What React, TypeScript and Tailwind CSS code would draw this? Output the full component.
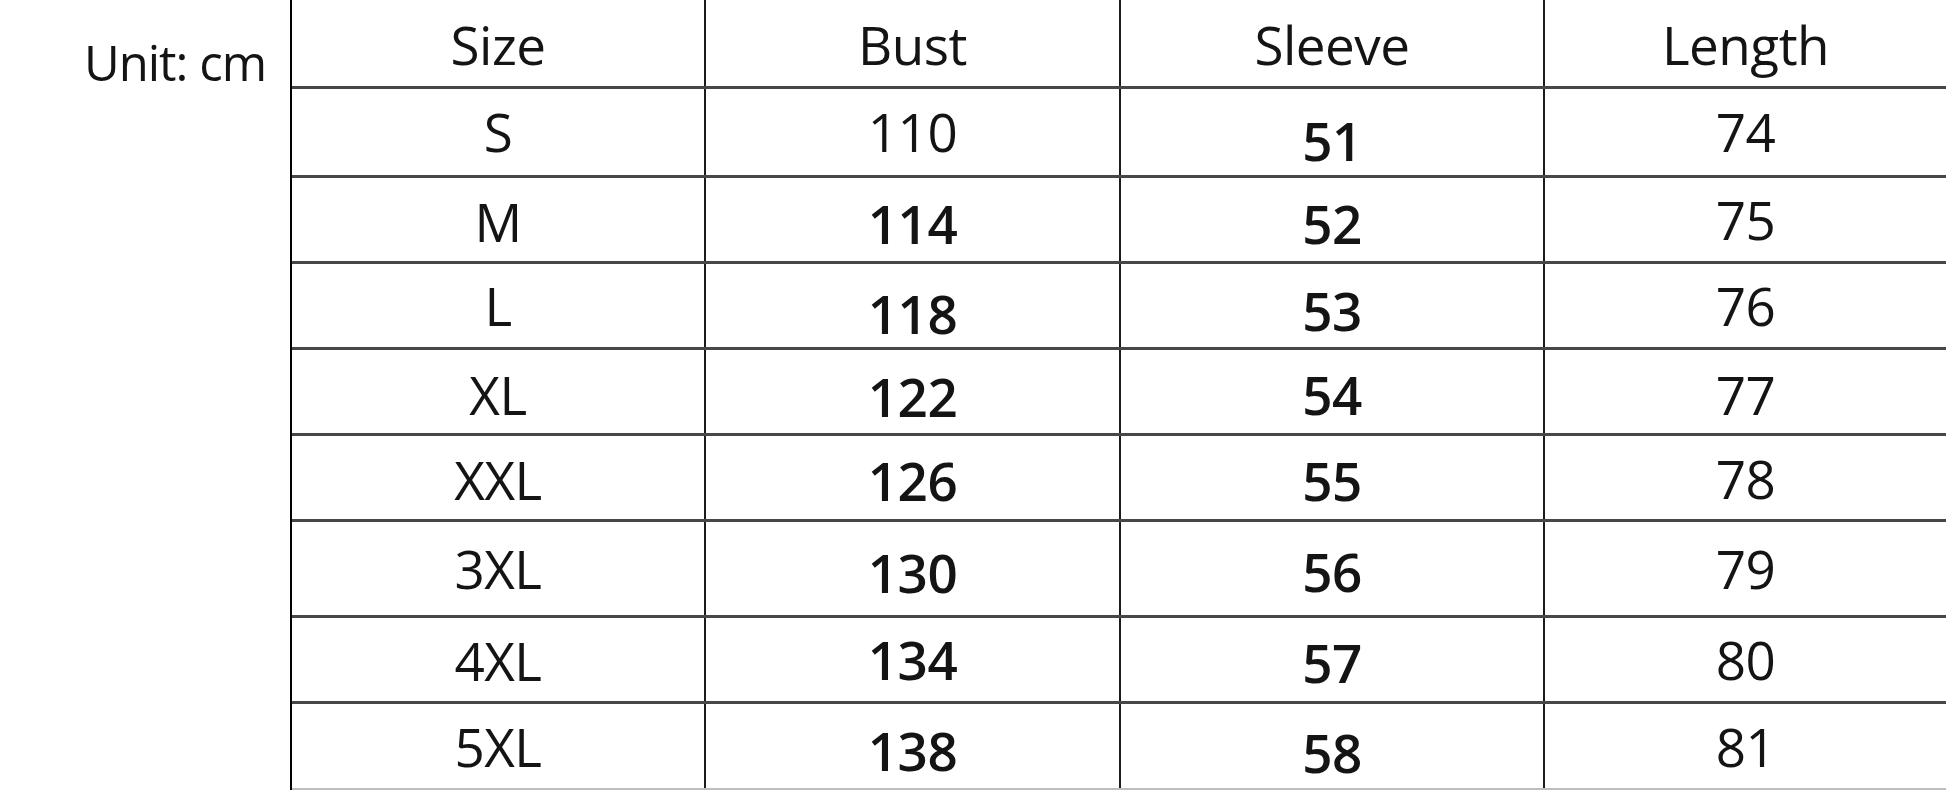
const headers = ["Size", "Bust", "Sleeve", "Length"];

type Cell = { text: string; bold?: boolean; shift: string };

// each row: height + cells; shift = small top padding to nudge text down like the source image
const rows: { h: string; cells: Cell[] }[] = [
  {
    h: "h-[89px]",
    cells: [
      { text: "S", shift: "pt-0" },
      { text: "110", shift: "pt-0" },
      { text: "51", bold: true, shift: "pt-[18px]" },
      { text: "74", shift: "pt-0" },
    ],
  },
  {
    h: "h-[86px]",
    cells: [
      { text: "M", shift: "pt-[4px]" },
      { text: "114", bold: true, shift: "pt-[8px]" },
      { text: "52", bold: true, shift: "pt-[8px]" },
      { text: "75", shift: "pt-0" },
    ],
  },
  {
    h: "h-[86px]",
    cells: [
      { text: "L", shift: "pt-0" },
      { text: "118", bold: true, shift: "pt-[16px]" },
      { text: "53", bold: true, shift: "pt-[10px]" },
      { text: "76", shift: "pt-0" },
    ],
  },
  {
    h: "h-[87px]",
    cells: [
      { text: "XL", shift: "pt-[6px]" },
      { text: "122", bold: true, shift: "pt-[10px]" },
      { text: "54", bold: true, shift: "pt-[6px]" },
      { text: "77", shift: "pt-[6px]" },
    ],
  },
  {
    h: "h-[86px]",
    cells: [
      { text: "XXL", shift: "pt-[4px]" },
      { text: "126", bold: true, shift: "pt-[6px]" },
      { text: "55", bold: true, shift: "pt-[6px]" },
      { text: "78", shift: "pt-[2px]" },
    ],
  },
  {
    h: "h-[96px]",
    cells: [
      { text: "3XL", shift: "pt-0" },
      { text: "130", bold: true, shift: "pt-[8px]" },
      { text: "56", bold: true, shift: "pt-[6px]" },
      { text: "79", shift: "pt-0" },
    ],
  },
  {
    h: "h-[86px]",
    cells: [
      { text: "4XL", shift: "pt-[2px]" },
      { text: "134", bold: true, shift: "pt-0" },
      { text: "57", bold: true, shift: "pt-[6px]" },
      { text: "80", shift: "pt-0" },
    ],
  },
  {
    h: "h-[86px]",
    cells: [
      { text: "5XL", shift: "pt-0" },
      { text: "138", bold: true, shift: "pt-[8px]" },
      { text: "58", bold: true, shift: "pt-[12px]" },
      { text: "81", shift: "pt-0" },
    ],
  },
];

const colW = ["w-[414px]", "w-[415px]", "w-[424px]", "flex-1"];

export default function App() {
  return (
    <div
      className="w-[1946px] h-[790px] bg-white flex text-[#141414] overflow-hidden"
      style={{ fontFamily: '"Open Sans", "Noto Sans", sans-serif' }}
    >
      <div className="w-[290px] shrink-0 flex justify-end pr-[24px] pt-[38px]">
        <span className="text-[49px] leading-none tracking-[-1px]">Unit: cm</span>
      </div>

      <div className="flex-1 flex flex-col border-l-2 border-black">
        <div className="h-[89px] flex border-b-[3px] border-[#474747]">
          {headers.map((h, i) => (
            <div
              key={h}
              className={`${colW[i]} ${i < 3 ? "border-r-2 border-[#1c1c1c]" : ""} flex items-center justify-center pt-[4px]`}
            >
              <span className="text-[53px] leading-none tracking-[-0.5px]">{h}</span>
            </div>
          ))}
        </div>

        {rows.map((r, ri) => (
          <div
            key={ri}
            className={`${r.h} flex ${ri < rows.length - 1 ? "border-b-[3px] border-[#474747]" : "border-b-[2px] border-[#bdbdbd]"}`}
          >
            {r.cells.map((c, ci) => (
              <div
                key={ci}
                className={`${colW[ci]} ${ci < 3 ? "border-r-2 border-[#1c1c1c]" : ""} flex items-center justify-center ${c.shift}`}
              >
                <span
                  className={`text-[53px] leading-none tracking-[-0.5px] ${c.bold ? "font-semibold" : "font-normal"}`}
                >
                  {c.text}
                </span>
              </div>
            ))}
          </div>
        ))}
      </div>
    </div>
  );
}
